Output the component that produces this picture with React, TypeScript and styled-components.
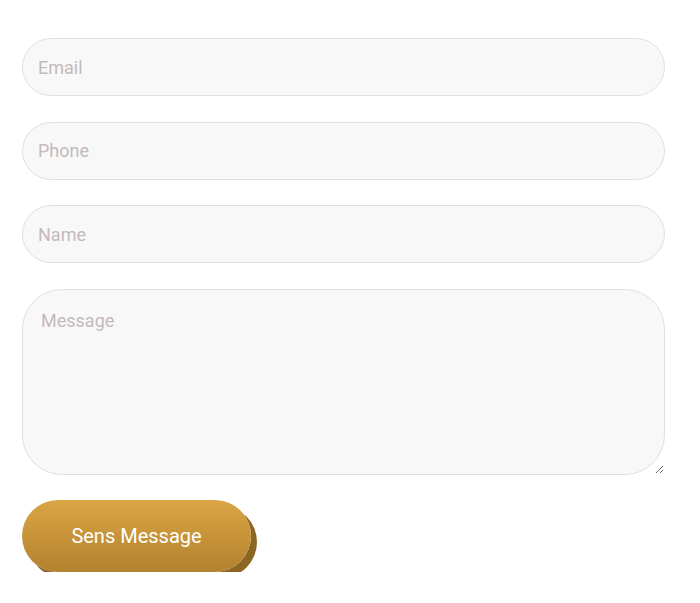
import styled, { createGlobalStyle } from 'styled-components'

const GlobalStyle = createGlobalStyle`
  body {
    margin: 0;
    background: #ffffff;
    font-family: Roboto, "Liberation Sans", sans-serif;
  }
`

const Form = styled.form`
  display: flex;
  flex-direction: column;
  gap: 25.5px;
  padding: 38px 35px 0 22px;
`

const Input = styled.input`
  box-sizing: border-box;
  width: 643px;
  height: 58px;
  padding: 0 15px;
  background-color: #f8f8f8;
  border: 1px solid #e0e0e0;
  border-radius: 29px;
  outline: none;
  font-family: Roboto, "Liberation Sans", sans-serif;
  font-size: 18px;
  color: #444;

  &::placeholder {
    color: #c4b9bb;
  }
`

const TextArea = styled.textarea`
  box-sizing: border-box;
  width: 643px;
  height: 186px;
  padding: 20px 18px;
  background-color: #f8f8f8;
  border: 1px solid #e0e0e0;
  border-radius: 40px;
  outline: none;
  font-family: Roboto, "Liberation Sans", sans-serif;
  font-size: 18px;
  color: #444;
  display: block;

  &::placeholder {
    color: #c4b9bb;
  }
`

const SubmitButton = styled.button`
  align-self: flex-start;
  width: 229px;
  height: 72px;
  border: 0;
  border-radius: 36px;
  background: linear-gradient(180deg, #daa543 0%, #b3822f 100%);
  box-shadow: 6px 6px 0 #8b6625;
  color: #ffffff;
  font-family: Roboto, "Liberation Sans", sans-serif;
  font-size: 20px;
  cursor: pointer;
`

export default function App() {
  return (
    <>
      <GlobalStyle />
      <Form onSubmit={(e) => e.preventDefault()}>
        <Input type="email" placeholder="Email" />
        <Input type="tel" placeholder="Phone" />
        <Input type="text" placeholder="Name" />
        <TextArea placeholder="Message" />
        <SubmitButton type="submit">Sens Message</SubmitButton>
      </Form>
    </>
  )
}
